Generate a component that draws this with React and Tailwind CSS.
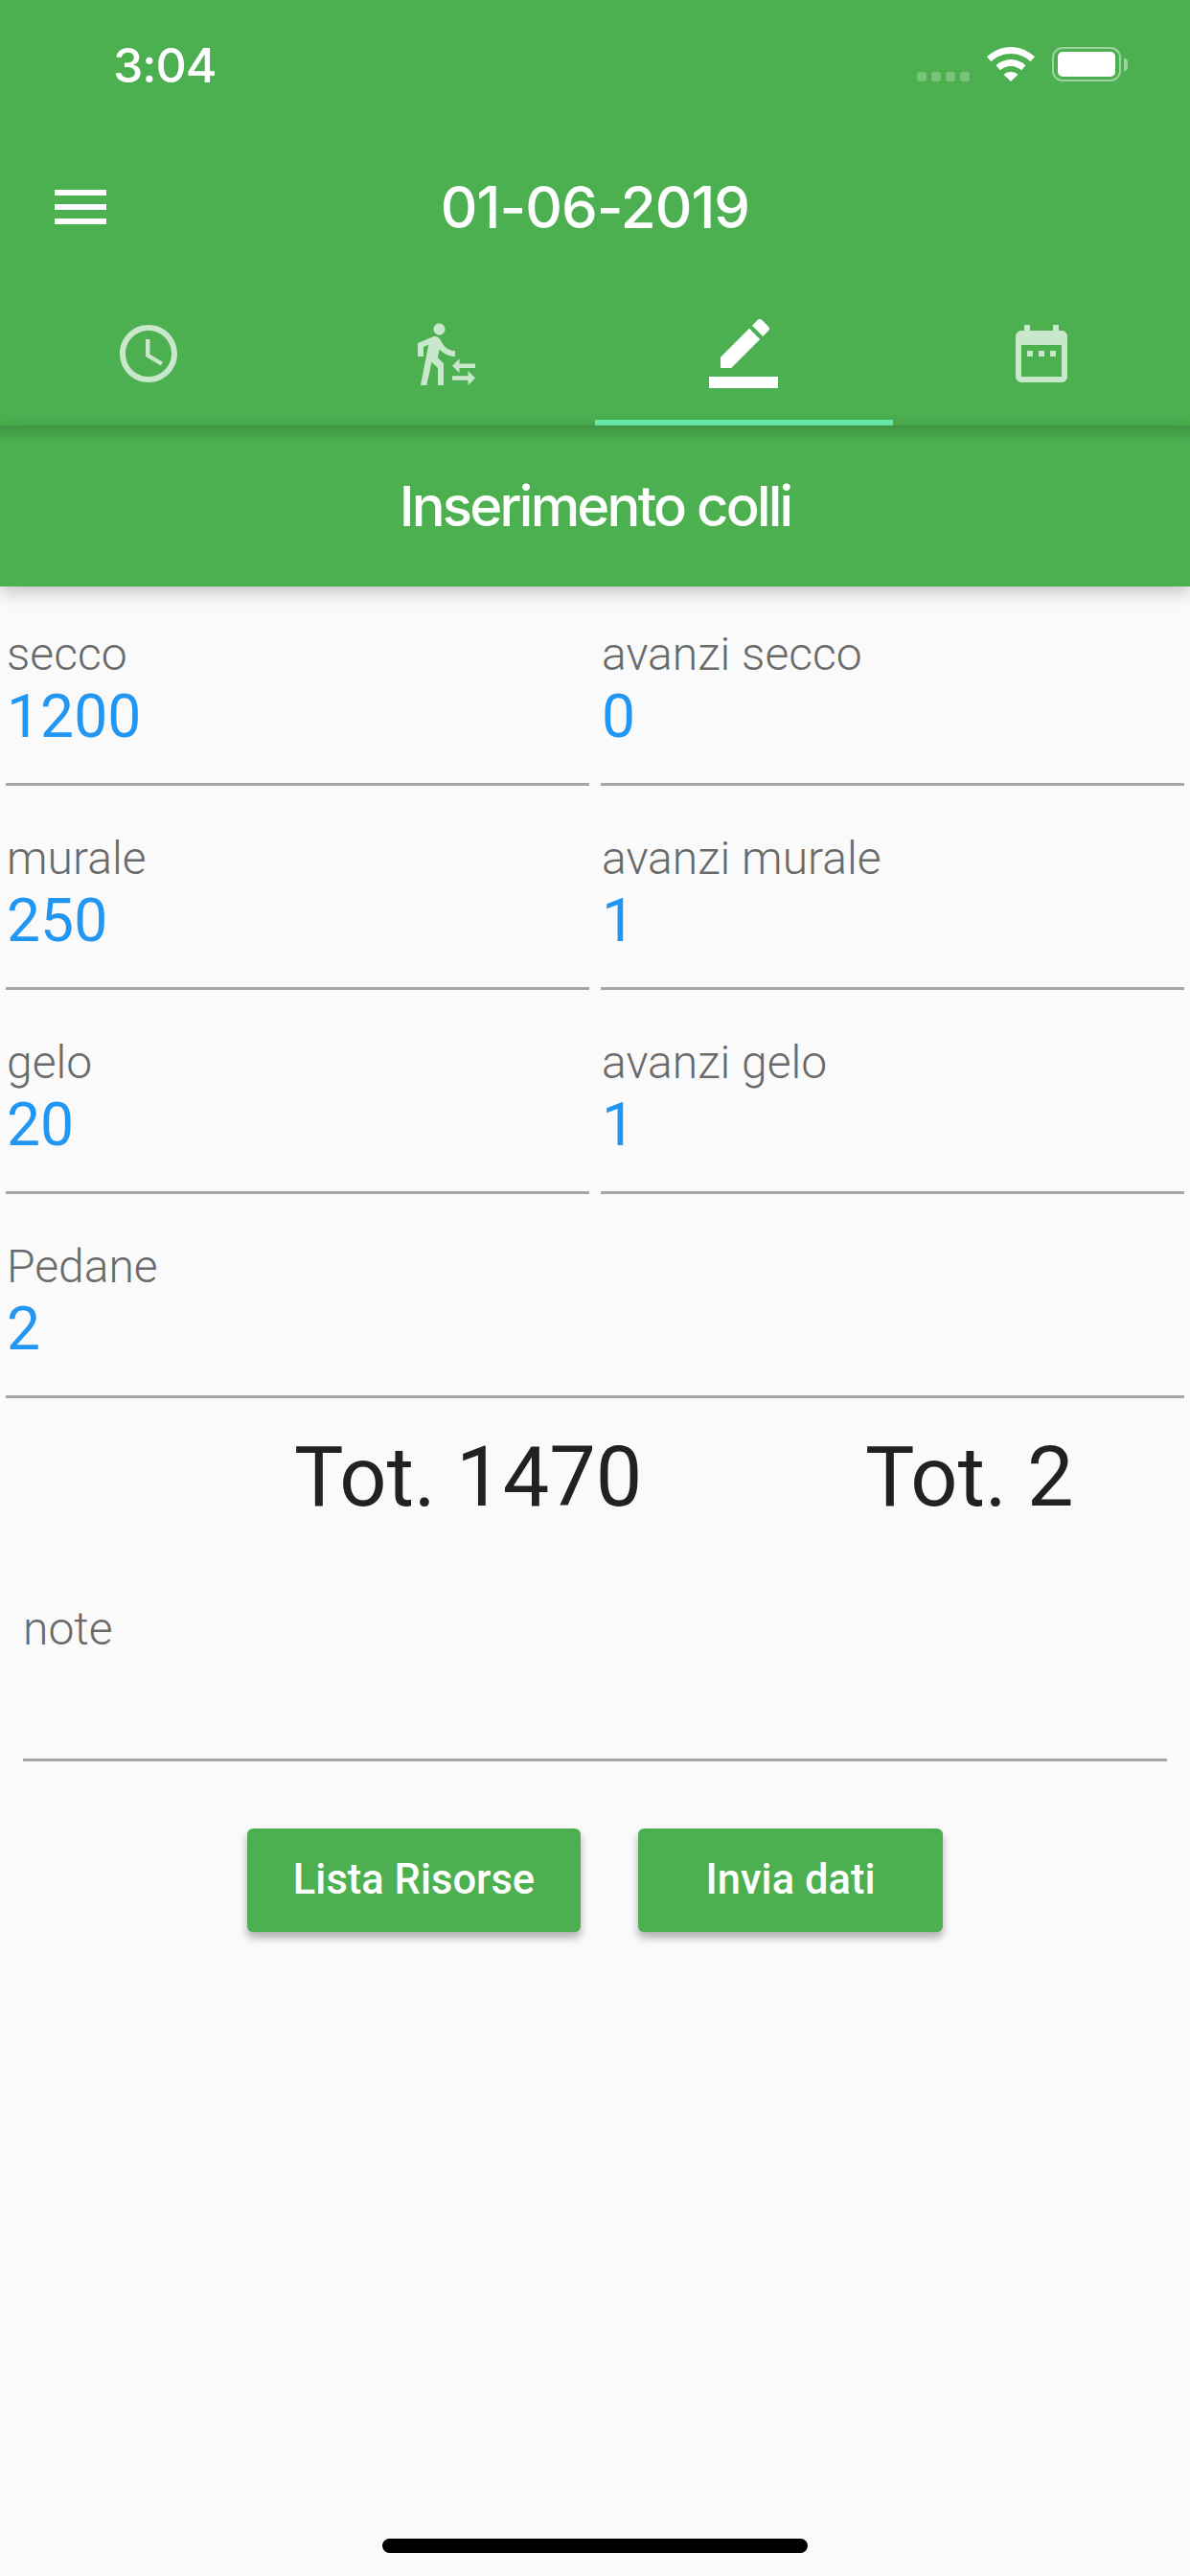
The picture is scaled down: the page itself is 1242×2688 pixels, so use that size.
import React from "react"

const roboto = "font-['Roboto',sans-serif]"
const sf = "font-['Inter','Liberation_Sans',sans-serif]"

function Icon({ d, className }) {
  return (
    <svg viewBox="0 0 24 24" fill="currentColor" className={`h-[72px] w-[72px] ${className}`}>
      <path d={d} />
    </svg>
  )
}

const menuPath = "M3 18h18v-2H3v2zm0-5h18v-2H3v2zm0-7v2h18V6H3z"
const clockPath =
  "M11.99 2C6.47 2 2 6.48 2 12s4.47 10 9.99 10C17.52 22 22 17.52 22 12S17.52 2 11.99 2zM12 20c-4.42 0-8-3.58-8-8s3.58-8 8-8 8 3.58 8 8-3.58 8-8 8zM12.5 7H11v6l5.25 3.15.75-1.23-4.5-2.67z"
const transferPath =
  "M16.49 15.5v-1.75L14 16.25l2.49 2.5V17H22v-1.5zm3.02 4.25H14v1.5h5.51V23L22 20.5 19.51 18zM9.5 5.5c1.1 0 2-.9 2-2s-.9-2-2-2-2 .9-2 2 .9 2 2 2zM5.75 8.9L3 23h2.1l1.75-8L9 17v6h2v-7.55L8.95 13.4l.6-3C10.85 12 12.8 13 15 13v-2c-1.85 0-3.45-1-4.35-2.45l-.95-1.6C9.35 6.35 8.7 6 8 6c-.25 0-.5.05-.75.15L2 8.3V13h2V9.65l1.75-.75"
const editPath =
  "M17.75 7L14 3.25l-10 10V17h3.75l10-10zm2.96-2.96c.39-.39.39-1.02 0-1.41L18.37.29c-.39-.39-1.02-.39-1.41 0L15 2.25 18.75 6l1.96-1.96zM0 20h24v4H0z"
const calendarPath =
  "M9 11H7v2h2v-2zm4 0h-2v2h2v-2zm4 0h-2v2h2v-2zm2-7h-1V2h-2v2H8V2H6v2H5c-1.11 0-1.99.9-1.99 2L3 20c0 1.1.89 2 2 2h14c1.1 0 2-.9 2-2V6c0-1.1-.9-2-2-2zm0 16H5V9h14v11z"

function StatusBar() {
  return (
    <div className="flex h-[132px] items-start justify-between pl-[118px] pr-[65px] pt-[38px] text-white">
      <span className={`${sf} text-[50px] leading-[60px] font-medium tracking-[-1px]`}>3:04</span>
      <div className="flex items-start pt-[11px]">
        <div className="mt-[26px] mr-[18px] flex gap-[5px]">
          <span className="h-[10px] w-[10px] rounded-[3px] bg-white/25" />
          <span className="h-[10px] w-[10px] rounded-[3px] bg-white/25" />
          <span className="h-[10px] w-[10px] rounded-[3px] bg-white/25" />
          <span className="h-[10px] w-[10px] rounded-[3px] bg-white/25" />
        </div>
        <svg viewBox="0 0 50 36" fill="white" className="h-[36px] w-[50px]">
          <path d="M25 0C15.5 0 7 3.7 0 10.300l4.400 5C10 10 17 7 25 7s15 3 20.600 8.300l4.400-5C43 3.700 34.500 0 25 0z" />
          <path d="M25 13c-6 0-11.200 2.300-15.500 6.200l4.500 5.100C17 21.700 20.800 20.100 25 20.100s8 1.600 11 4.200l4.500-5.100C36.200 15.300 31 13 25 13z" />
          <path d="M25 26c-3 0-5.500 1-7.500 2.800L25 36l7.500-7.200C30.500 27 28 26 25 26z" />
        </svg>
        <div className="ml-[18px] flex items-center">
          <div className="flex h-[36px] w-[72px] items-center justify-center rounded-[11px] border-[2px] border-white/45">
            <div className="h-[26px] w-[60px] rounded-[5px] bg-white" />
          </div>
          <div className="ml-[3px] h-[13px] w-[4px] rounded-r-full bg-white/45" />
        </div>
      </div>
    </div>
  )
}

function Tab({ d, active }) {
  return (
    <div className={`relative flex flex-1 items-start justify-center pt-[33px] ${active ? "text-white" : "text-white/70"}`}>
      <Icon d={d} />
      {active && <div className="absolute inset-x-0 bottom-0 h-[6px] bg-[#69f0ae]" />}
    </div>
  )
}

function Field({ label, value, full }) {
  return (
    <div className={`h-[187px] border-b-[3px] border-[#a6a6a6] pl-[1px] ${full ? "col-span-2" : ""}`}>
      <div className="pt-[22px] text-[48px] leading-[56px] font-light text-[#6a6a6a]">{label}</div>
      <div className="mt-[2px] text-[62.4px] leading-[70px] text-[#2196f3]">{value}</div>
    </div>
  )
}

function Bottone({ children, className }) {
  return (
    <button className={`flex h-[108px] items-center justify-center rounded-[6px] bg-[#4caf50] text-[43.5px] font-medium text-white shadow-[0_6px_9px_rgba(0,0,0,0.3)] ${className}`}>
      {children}
    </button>
  )
}

export default function App() {
  return (
    <div className={`${roboto} relative flex h-[2688px] w-[1242px] flex-col bg-[#fafafa]`}>
      <header className="relative z-10 bg-[#4caf50] text-white">
        <StatusBar />
        <div className="relative flex h-[168px] items-center pl-[48px]">
          <Icon d={menuPath} />
          <h1 className={`${sf} absolute inset-x-0 text-center text-[60px] leading-[168px] font-medium tracking-[-1px]`}>
            01-06-2019
          </h1>
        </div>
        <div className="flex h-[144px]">
          <Tab d={clockPath} />
          <Tab d={transferPath} />
          <Tab d={editPath} active />
          <Tab d={calendarPath} />
        </div>
      </header>

      <div className="relative z-10 flex h-[168px] items-center justify-center bg-[#4caf50] shadow-[0_6px_18px_rgba(0,0,0,0.22)]">
        <div className="absolute inset-x-0 top-0 h-[18px] bg-gradient-to-b from-black/15 to-transparent" />
        <h2 className={`${sf} text-[58px] font-medium tracking-[-2.8px] text-white`}>Inserimento colli</h2>
      </div>

      <div className="grid grid-cols-2 gap-x-[12px] gap-y-[26px] px-[6px] pt-[21px]">
        <Field label="secco" value="1200" />
        <Field label="avanzi secco" value="0" />
        <Field label="murale" value="250" />
        <Field label="avanzi murale" value="1" />
        <Field label="gelo" value="20" />
        <Field label="avanzi gelo" value="1" />
        <Field label="Pedane" value="2" full />
      </div>

      <div className="mt-[34px] flex pl-[307px] text-[86.4px] leading-[98px] text-[#212121]">
        <span className="w-[596px]">Tot. 1470</span>
        <span>Tot. 2</span>
      </div>

      <div className="mx-[24px] mt-[78px] h-[169px] border-b-[3px] border-[#a6a6a6] pt-[3px] text-[48px] leading-[56px] font-light text-[#6a6a6a]">
        note
      </div>

      <div className="mt-[70px] flex justify-center gap-[60px]">
        <Bottone className="w-[348px]">Lista Risorse</Bottone>
        <Bottone className="w-[318px]">Invia dati</Bottone>
      </div>

      <div className="mt-auto mb-[24px] h-[15px] w-[444px] self-center rounded-full bg-black" />
    </div>
  )
}
